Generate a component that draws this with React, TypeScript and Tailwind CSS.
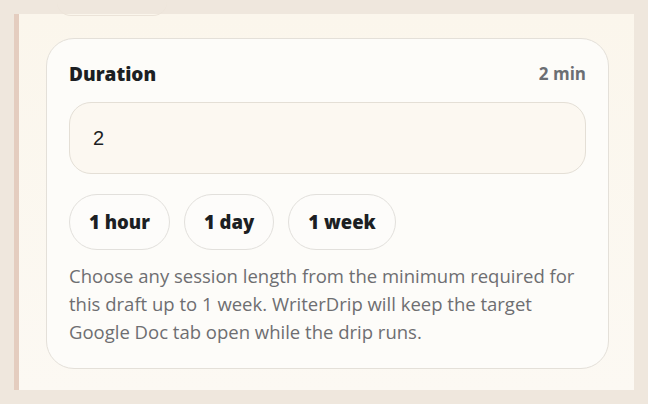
const PRESETS = ["1 hour", "1 day", "1 week"];

export default function App() {
  return (
    <div className="h-[404px] w-[648px] bg-[#efe7dd] p-[14px]">
      <div className="relative h-full border-l-[5px] border-[#e4cdbf] bg-gradient-to-b from-[#fbf6ec] to-[#fcf9f3] pb-[21px] pl-[27px] pr-[25px] pt-[24px]">
        <div className="absolute left-[38px] top-[-14px] h-[16px] w-[110px] rounded-b-[14px] border-b border-[#ebe3d8]" />
        <DurationCard />
      </div>
    </div>
  );
}

function DurationCard() {
  return (
    <section className="flex h-full flex-col rounded-[28px] border border-[#e4e0d9] bg-[#fdfcf9] px-[22px] pt-[22px] font-['Open_Sans',sans-serif]">
      <div className="flex h-[26px] items-center justify-between">
        <h2 className="text-[19px] font-extrabold text-[#1c1f23]">Duration</h2>
        <span className="text-[17px] font-bold text-[#6b6e73]">2 min</span>
      </div>

      <input
        className="mt-[15px] h-[72px] w-full rounded-[22px] border border-[#e4dfd6] bg-[#fcf8f1] px-[23px] font-['Liberation_Sans',sans-serif] text-[20px] text-[#1c1f23] outline-none"
        defaultValue="2"
        type="text"
      />

      <div className="mt-[20px] flex gap-[14px]">
        {PRESETS.map((label) => (
          <button
            className="h-[56px] rounded-full border border-[#e2e0dc] bg-[#fdfcfa] px-[19px] text-[18.5px] font-extrabold text-[#1c1f23]"
            key={label}
            type="button"
          >
            {label}
          </button>
        ))}
      </div>

      <p className="mt-[12px] text-[18.5px] leading-[28px] text-[#6e6e71]">
        Choose any session length from the minimum required for this draft up
        to 1 week. WriterDrip will keep the target Google Doc tab open while
        the drip runs.
      </p>
    </section>
  );
}
